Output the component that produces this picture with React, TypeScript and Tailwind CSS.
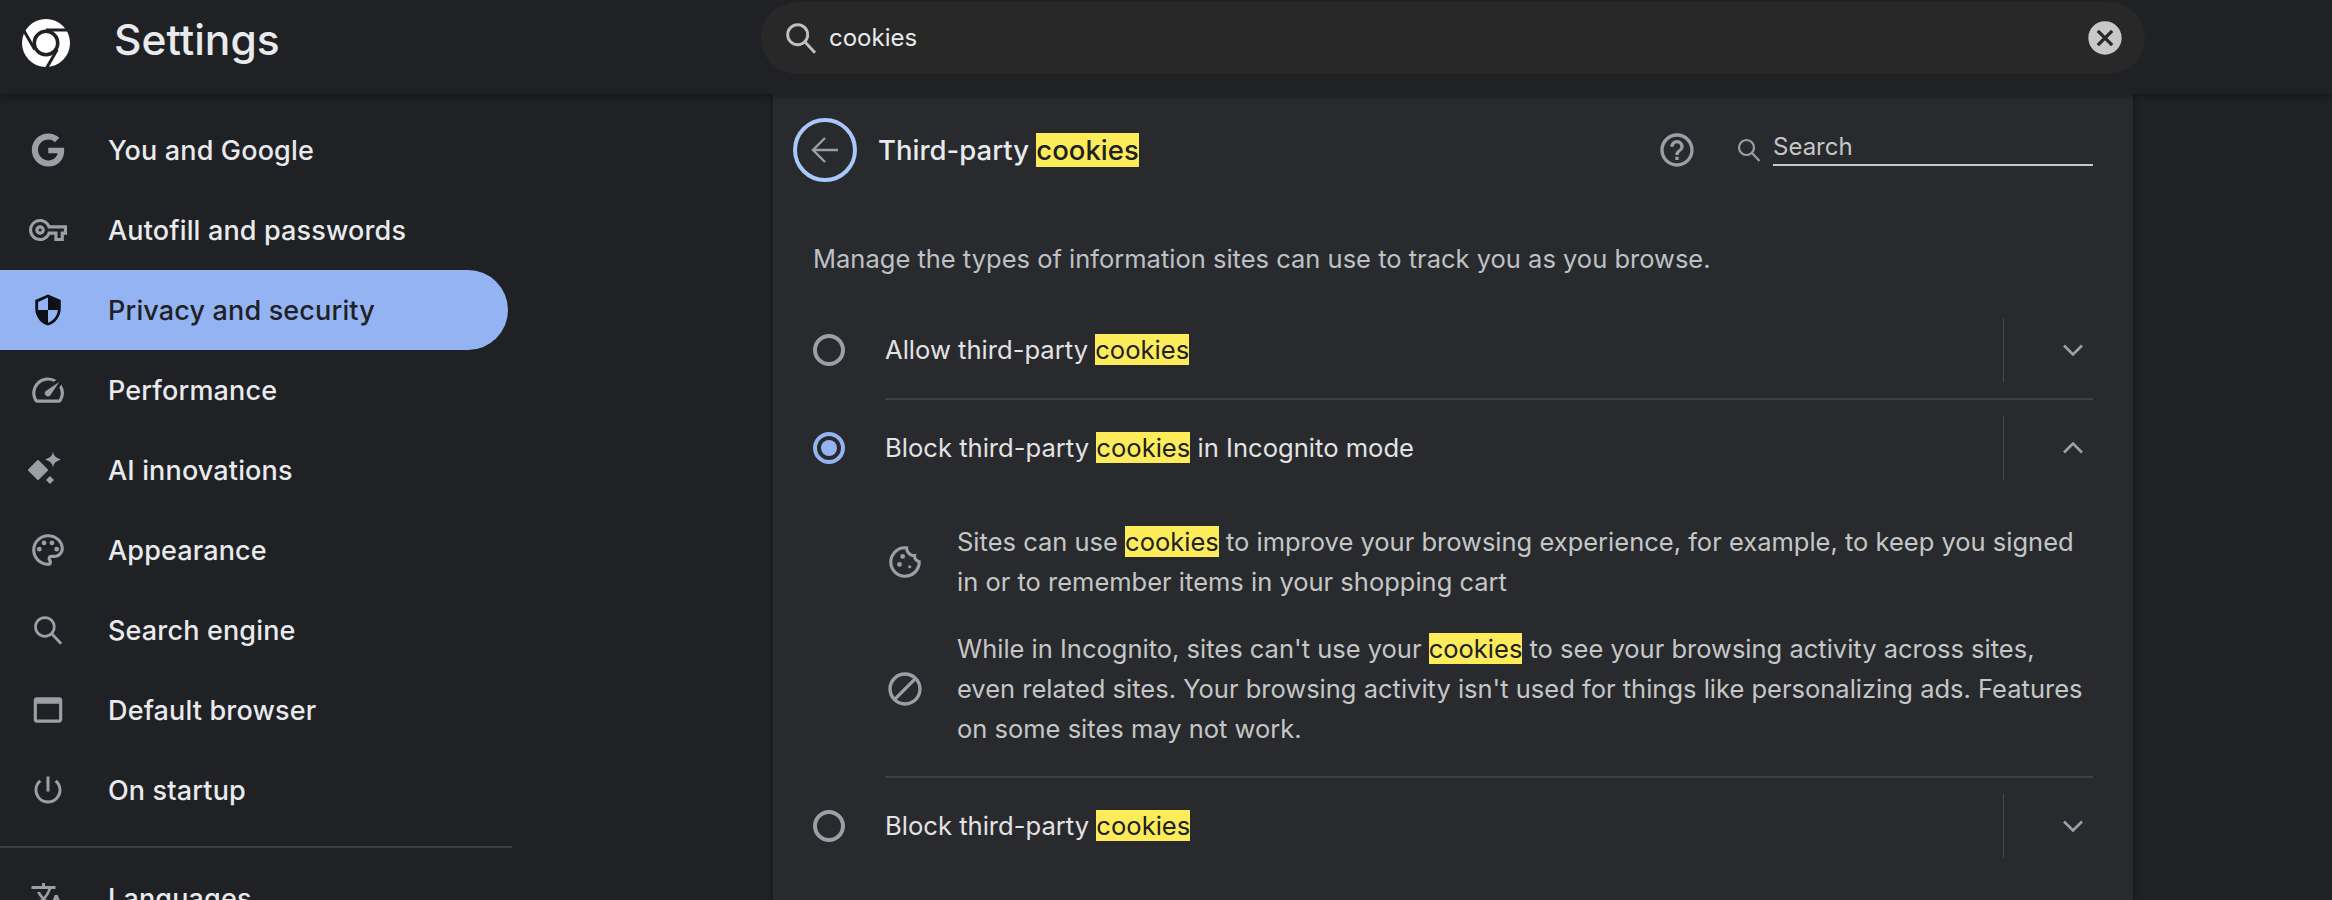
import React from "react";
import {
  MdOutlineVpnKey, MdSecurity, MdOutlineSpeed, MdOutlinePalette, MdOutlineWebAsset,
  MdOutlinePowerSettingsNew, MdTranslate, MdOutlineCookie, MdBlock, MdHelpOutline, MdCancel,
} from "react-icons/md";
import { FaGoogle } from "react-icons/fa";

const Mark = ({ children }: { children: React.ReactNode }) => (
  <mark className="bg-[#fdec5a] text-[#202124]">{children}</mark>
);

const SearchGlyph = ({ className }: { className: string }) => (
  <svg viewBox="0 0 24 24" fill="none" stroke="currentColor" strokeWidth="2.200" className={className}>
    <circle cx="9.500" cy="9.500" r="7.500" />
    <path d="M15 15 22.500 23" />
  </svg>
);

const ChromeLogo = () => (
  <svg viewBox="0 0 48 48" className="w-12 h-12 shrink-0">
    <circle cx="24" cy="24" r="24" fill="#fff" />
    <circle cx="24" cy="24" r="11.750" fill="#fff" stroke="#202124" strokeWidth="3.500" />
    {[0, 120, 240].map((a) => (
      <path key={a} d="M24 11H46" stroke="#202124" strokeWidth="3" transform={`rotate(${a} 24 24)`} />
    ))}
  </svg>
);

const Sparkles = () => (
  <svg viewBox="0 0 48 48" className="w-12 h-12" fill="#9aa0a6">
    <path d="M14 15 23 24 14 33 5 24Z" stroke="#9aa0a6" strokeWidth="2" strokeLinejoin="round" />
    <path d="M29 5.500C29.800 10 31.500 11.700 37 13.500 31.500 15.300 29.800 17 29 21.500 28.200 17 26.500 15.300 21 13.500 26.500 11.700 28.200 10 29 5.500Z" />
    <path d="M26 30 30 34 26 38 22 34Z" />
  </svg>
);

const nav: { icon: React.ReactNode; label: string; active?: boolean }[] = [
  { icon: <FaGoogle className="w-[34px] h-[34px] text-[#9aa0a6]" />, label: "You and Google" },
  { icon: <MdOutlineVpnKey className="w-[38px] h-[38px] text-[#9aa0a6]" />, label: "Autofill and passwords" },
  { icon: <MdSecurity className="w-[34px] h-[34px] text-[#0d1117]" />, label: "Privacy and security", active: true },
  { icon: <MdOutlineSpeed className="w-[38px] h-[38px] text-[#9aa0a6]" />, label: "Performance" },
  { icon: <Sparkles />, label: "AI innovations" },
  { icon: <MdOutlinePalette className="w-[38px] h-[38px] text-[#9aa0a6]" />, label: "Appearance" },
  { icon: <SearchGlyph className="w-[30px] h-[30px] text-[#9aa0a6]" />, label: "Search engine" },
  { icon: <MdOutlineWebAsset className="w-[38px] h-[38px] text-[#9aa0a6]" />, label: "Default browser" },
  { icon: <MdOutlinePowerSettingsNew className="w-[36px] h-[36px] text-[#9aa0a6]" />, label: "On startup" },
];

const NavRow = ({ icon, label, active }: { icon: React.ReactNode; label: string; active?: boolean }) => (
  <div className={`flex items-center h-20 w-[508px] rounded-r-[40px] ${active ? "bg-[#94b3f3] text-[#202124]" : "text-[#e8eaed]"}`}>
    <div className="w-[96px] flex items-center justify-center shrink-0">{icon}</div>
    <span className="ml-3 mt-[2px] text-[27px] font-medium tracking-[0.15px]">{label}</span>
  </div>
);

const Radio = ({ on }: { on?: boolean }) => (
  <div className={`w-8 h-8 rounded-full border-[4px] flex items-center justify-center shrink-0 ${on ? "border-[#94b3f3]" : "border-[#9aa0a6]"}`}>
    {on && <div className="w-4 h-4 rounded-full bg-[#94b3f3]" />}
  </div>
);

const Chevron = ({ up }: { up?: boolean }) => (
  <svg viewBox="0 0 20 12" fill="none" stroke="#9aa0a6" strokeWidth="2.600" className={`w-5 h-3 ${up ? "rotate-180" : ""}`}>
    <path d="M1 1.500 10 10.500 19 1.500" />
  </svg>
);

const OptionRow = ({ on, up, children }: { on?: boolean; up?: boolean; children: React.ReactNode }) => (
  <div className="flex items-center h-20 pl-5">
    <Radio on={on} />
    <div className="ml-[40px] flex-1 text-[25.6px] text-[#e3e3e3]">{children}</div>
    <div className="w-px h-16 bg-[#47494d]" />
    <div className="w-[89px] flex justify-end pr-[10px]">
      <Chevron up={up} />
    </div>
  </div>
);

const Detail = ({ icon, children }: { icon: React.ReactNode; children: React.ReactNode }) => (
  <div className="flex items-center">
    <div className="w-[72px] shrink-0">
      <div className="w-10 flex justify-center">{icon}</div>
    </div>
    <p className="text-[25.5px] leading-10 text-[#c4c7c5]">{children}</p>
  </div>
);

export default function App() {
  return (
    <div className="w-[2332px] h-[900px] overflow-hidden bg-[#202124] font-['Inter',sans-serif] flex flex-col">
      <header className="h-[94px] shrink-0 flex items-start relative z-10 shadow-[0_2px_6px_rgba(0,0,0,0.35)] bg-[#202124]">
        <div className="w-[761px] shrink-0 flex items-center pl-[22px] pt-[14px]">
          <ChromeLogo />
          <span className="ml-[44px] text-[42.5px] font-medium text-[#e8eaed] -mt-[6px]">Settings</span>
        </div>
        <div className="w-[1384px] h-[72px] mt-[2px] rounded-[36px] bg-[#282828] flex items-center pl-6 pr-5">
          <SearchGlyph className="w-8 h-8 text-[#bdc1c6]" />
          <span className="ml-3 text-[24px] text-[#e8eaed] flex-1">cookies</span>
          <MdCancel className="w-10 h-10 text-[#c7c9c7]" />
        </div>
      </header>

      <div className="flex flex-1 min-h-0">
        <aside className="w-[773px] shrink-0 pt-4">
          {nav.map((n) => (
            <NavRow key={n.label} {...n} />
          ))}
          <div className="h-[2px] w-[512px] bg-[#3c3d40] mt-4 mb-[10px]" />
          <NavRow icon={<MdTranslate className="w-[36px] h-[36px] text-[#9aa0a6]" />} label="Languages" />
        </aside>

        <main className="w-[1360px] shrink-0 bg-[#292a2e] shadow-[0_0_6px_rgba(0,0,0,0.4)] pl-5 pr-10">
          <div className="flex items-center h-16 mt-6">
            <div className="w-16 h-16 rounded-full border-4 border-[#a8c7fa] flex items-center justify-center shrink-0">
              <svg viewBox="0 0 28 28" fill="none" stroke="#9aa0a6" strokeWidth="2.400" className="w-7 h-7">
                <path d="M27 14H2M14 2 2 14l12 12" />
              </svg>
            </div>
            <h1 className="ml-[21px] mt-[2px] flex-1 text-[27.5px] font-medium text-[#e8eaed]">
              Third-party <Mark>cookies</Mark>
            </h1>
            <MdHelpOutline className="w-10 h-10 text-[#9aa0a6]" />
            <SearchGlyph className="ml-[40px] w-[24px] h-[24px] text-[#9aa0a6]" />
            <div className="ml-[12px] w-[320px] h-[36px] mb-1 border-b-2 border-[#c7c7c7] text-[24px] text-[#c4c7c5] leading-[34px]">
              Search
            </div>
          </div>

          <p className="mt-[57px] ml-5 text-[25.5px] text-[#bdc1c6] leading-10">
            Manage the types of information sites can use to track you as you browse.
          </p>

          <div className="mt-[31px]">
            <OptionRow>
              Allow third-party <Mark>cookies</Mark>
            </OptionRow>
            <div className="h-[2px] ml-[92px] bg-[#3f4044] my-2" />
            <OptionRow on up>
              Block third-party <Mark>cookies</Mark> in Incognito mode
            </OptionRow>
            <div className="ml-[92px] mt-[34px] flex flex-col gap-[27px]">
              <Detail icon={<MdOutlineCookie className="w-[38px] h-[38px] text-[#9aa0a6]" />}>
                Sites can use <Mark>cookies</Mark> to improve your browsing experience, for example, to keep you signed in or to remember items in your shopping cart
              </Detail>
              <Detail icon={<MdBlock className="w-10 h-10 text-[#9aa0a6]" />}>
                While in Incognito, sites can't use your <Mark>cookies</Mark> to see your browsing activity across sites, even related sites. Your browsing activity isn't used for things like personalizing ads. Features on some sites may not work.
              </Detail>
            </div>
            <div className="h-[2px] ml-[92px] bg-[#3f4044] mt-[27px] mb-2" />
            <OptionRow>
              Block third-party <Mark>cookies</Mark>
            </OptionRow>
          </div>
        </main>
      </div>
    </div>
  );
}
